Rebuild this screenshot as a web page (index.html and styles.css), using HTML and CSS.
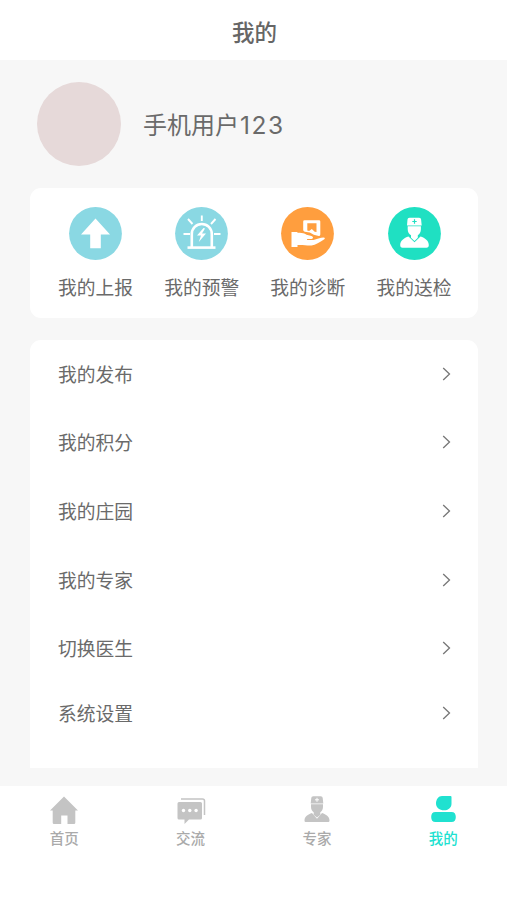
FILE: index.html
```html
<!DOCTYPE html>
<html lang="zh-CN">
<head>
<meta charset="utf-8">
<title>我的</title>
<link rel="stylesheet" href="styles.css">
</head>
<body>
<header class="header"><h1>我的</h1></header>
<main class="main">
  <section class="profile">
    <div class="avatar"></div>
    <div class="username">手机用户<span class="digits">123</span></div>
  </section>
  <section class="card shortcuts">
    <a class="shortcut">
      <svg class="disc" viewBox="0 0 53 53"><circle cx="26.5" cy="26.5" r="26.4" fill="#8ad8e3"/><path d="M26.500 11.500L41 27.500h-9.200v13.800H21.200V27.500H12z" fill="#fff"/></svg>
      <span>我的上报</span>
    </a>
    <a class="shortcut">
      <svg class="disc" viewBox="0 0 53 53"><circle cx="26.500" cy="26.500" r="26.400" fill="#8ad8e3"/><g fill="none" stroke="#fff" stroke-width="1.900"><path d="M16.800 40V27a10 10 0 0 1 20 0v13" stroke-width="2.600"/><path d="M12.500 40.600h28" stroke-width="2.600"/><path d="M26.800 8.500v5.500M13 12l4.500 5M40.500 12L36 17M8.500 27H15M39 27h6.500"/></g><path d="M28.500 21l-6.500 7.500h4l-2.200 6.500 7.200-8.500h-4l3-5z" fill="#fff"/></svg>
      <span>我的预警</span>
    </a>
    <a class="shortcut">
      <svg class="disc" viewBox="0 0 53 53"><circle cx="26.500" cy="26.500" r="26.400" fill="#ff9e3e"/><path fill="#fff" fill-rule="evenodd" d="M23.500 13.200h14.500q1.300 0 1.300 1.300v13q0 1.500-1.500 1.500l-5-1.300-4-2.200-5-.8q-1.600-.3-1.600-1.700v-8.500q0-1.300 1.300-1.300zM26.300 16.300v7.200l1.800.5 2.700-2 2.900 2.700 1.800.3v-8.700z"/><path fill="#fff" d="M10.500 25h6v15h-6zM16.500 26c3-.6 6.500.2 9 1.700l5 1.400c2 .6 2 2.700 0 3h-4.500l.2.900h6.300c3-.8 7-2.500 10-2.600 1.800 0 1.600 1.400.4 2.200-4 2.700-8.400 5.400-12.400 5.900-4 .4-8.500-.9-14-.5z"/></svg>
      <span>我的诊断</span>
    </a>
    <a class="shortcut">
      <svg class="disc" viewBox="0 0 53 53"><circle cx="26.500" cy="26.500" r="26.400" fill="#1fe0c2"/><path fill="#fff" d="M19.500 12.500q0-1.700 2-1.700h9.600q2 0 2 1.700l.6 6H19zM19.700 19.300h13.200v3c0 2.800-1.400 5-3.100 6v2.500L26.500 34 23 30.800v-2.500c-1.900-1-3.300-3.200-3.300-6zM20.500 29.500l6 5.700 6-5.700c4.500 1.500 8.300 4 8.300 8.500 0 1.700-.8 2.800-2.300 2.800h-24c-1.500 0-2.300-1.100-2.300-2.800 0-4.500 3.800-7 8.300-8.500z"/><path d="M26.500 12.300v4.400M24.300 14.500h4.400" stroke="#1fe0c2" stroke-width="1.200"/></svg>
      <span>我的送检</span>
    </a>
  </section>
  <nav class="card menu">
    <a class="row"><span>我的发布</span><svg class="chevron" viewBox="0 0 9 14"><path d="M1.200 1l6.300 6-6.300 6"/></svg></a>
    <a class="row"><span>我的积分</span><svg class="chevron" viewBox="0 0 9 14"><path d="M1.200 1l6.300 6-6.300 6"/></svg></a>
    <a class="row"><span>我的庄园</span><svg class="chevron" viewBox="0 0 9 14"><path d="M1.200 1l6.300 6-6.300 6"/></svg></a>
    <a class="row"><span>我的专家</span><svg class="chevron" viewBox="0 0 9 14"><path d="M1.200 1l6.300 6-6.300 6"/></svg></a>
    <a class="row"><span>切换医生</span><svg class="chevron" viewBox="0 0 9 14"><path d="M1.200 1l6.300 6-6.300 6"/></svg></a>
    <a class="row row-last"><span>系统设置</span><svg class="chevron" viewBox="0 0 9 14"><path d="M1.200 1l6.300 6-6.300 6"/></svg></a>
  </nav>
</main>
<footer class="tabs">
  <a class="tab">
    <svg viewBox="0 0 30 30"><path fill="#c4c4c4" d="M15 1.500L29 15.500h-2.700v12.200q0 1.300-1.300 1.300h-6.500v-8.500h-6.300V29H5q-1.300 0-1.300-1.300V15.500H1z"/></svg>
    <span>首页</span>
  </a>
  <a class="tab">
    <svg viewBox="0 0 30 30"><path fill="#c4c4c4" d="M3 7h21.500q1.500 0 1.500 1.500V23q0 1.500-1.500 1.500H13L8.500 29v-4.500H3Q1.500 24.500 1.500 23V8.500Q1.500 7 3 7z"/><path d="M5 4h21.500q2 0 2 2v14" fill="none" stroke="#c4c4c4" stroke-width="1.500"/><g fill="#fff"><circle cx="7.500" cy="15.500" r="1.700"/><circle cx="13.800" cy="15.500" r="1.700"/><circle cx="20.100" cy="15.500" r="1.700"/></g></svg>
    <span>交流</span>
  </a>
  <a class="tab">
    <svg viewBox="0 0 30 30"><path fill="#c4c4c4" d="M9.300 3q0-1.800 2-1.800h7.400q2 0 2 1.800l.6 5.500H8.700zM9 9.200h12v2.500c0 2.500-1 4.500-2.700 5.500v2.500L15 22.500l-3.300-2.800v-2.500C10 16.200 9 14.200 9 11.700zM10 18l5 5.700L20 18c4 1.400 7.500 3.500 7.500 7.500 0 1-.6 1.600-1.600 1.600H4.100c-1 0-1.600-.6-1.600-1.600 0-4 3.500-6.100 7.500-7.500z"/><path d="M15 2.800v4M13 4.800h4" stroke="#fff"/></svg>
    <span>专家</span>
  </a>
  <a class="tab active">
    <svg viewBox="0 0 30 30"><path fill="#20e1d0" d="M14 1h8.500q1 0 1 1v6.700c0 4-3.200 6.600-7.500 6.600s-8-2.800-8-6.800S10.500 1 14 1zM7.500 17h16c3 0 4.300 1.900 4.300 5s-1.300 5-4.300 5h-16c-3 0-4.300-1.900-4.300-5s1.300-5 4.300-5z"/></svg>
    <span>我的</span>
  </a>
</footer>
</body>
</html>
```
FILE: styles.css
```css
* { box-sizing: border-box; }
body {
  margin: 0;
  height: 900px;
  display: flex;
  flex-direction: column;
  background: #fff;
  color: #6a6a6a;
  font-family: "Noto Sans CJK SC", sans-serif;
}
svg { display: block; }
.header {
  height: 60px;
  display: flex;
  align-items: center;
  justify-content: center;
  padding: 2px 0 0 2px;
}
.header h1 {
  margin: 0;
  font-size: 22.5px;
  font-weight: 500;
  line-height: 30px;
  color: #666;
}
.main {
  height: 726px;
  padding: 22px 29px 18px 30px;
  background: #f7f7f7;
}
.profile {
  display: flex;
  align-items: center;
  gap: 22px;
  height: 84px;
  padding-left: 7px;
}
.avatar {
  width: 84px;
  height: 84px;
  border-radius: 50%;
  background: #e6d9d9;
}
.username { font-size: 24px; line-height: 32px; }
.digits {
  margin-left: 1px;
  font-family: Inter, sans-serif;
  font-size: 24.5px;
  letter-spacing: 1.6px;
}
.card { background: #fff; border-radius: 11px; }
.shortcuts {
  display: grid;
  grid-template-columns: repeat(4, 106.2px);
  height: 130px;
  margin-top: 22px;
  padding: 19.4px 0 0 12.4px;
}
.shortcut {
  display: flex;
  flex-direction: column;
  align-items: center;
  gap: 12.6px;
  font-size: 18.75px;
  line-height: 28px;
}
.disc { width: 53px; height: 53px; }
.menu {
  height: 428px;
  margin-top: 22px;
  padding: 0 27px 0 28px;
  border-radius: 11px 11px 0 0;
}
.row {
  display: flex;
  align-items: center;
  justify-content: space-between;
  height: 68.75px;
  font-size: 18.75px;
  line-height: 28px;
}
.row:first-child { height: 67.75px; }
.row-last { height: 61px; }
.chevron {
  width: 9px;
  height: 14px;
  fill: none;
  stroke: #777;
  stroke-width: 1.3;
}
.tabs {
  display: grid;
  grid-template-columns: repeat(4, 126.4px);
  padding: 9px 0 0 1px;
  height: 114px;
}
.tab {
  display: flex;
  flex-direction: column;
  align-items: center;
  gap: 3px;
  color: #aaa;
  font-size: 14.5px;
  font-weight: 500;
  line-height: 20px;
}
.tab svg { width: 30px; height: 30px; }
.active { color: #20e1d0; }
```
